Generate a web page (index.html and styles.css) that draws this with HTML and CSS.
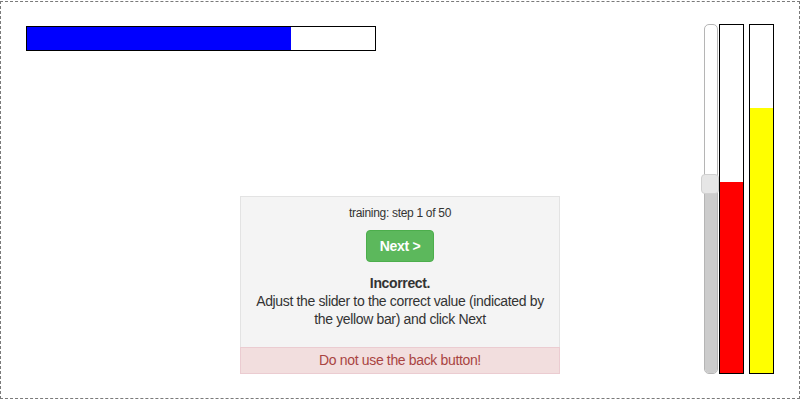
FILE: index.html
```html
<!DOCTYPE html>
<html>
<head>
<meta charset="utf-8">
<link rel="stylesheet" href="styles.css">
</head>
<body>
<div class="frame">
  <div class="progress"><div class="progress-fill" style="width:264px"></div></div>
  <div class="panel">
    <div class="panel-body">
      <div class="step">training: step 1 of 50</div>
      <button class="btn-next">Next &gt;</button>
      <div class="feedback">
        <strong>Incorrect.</strong><br>
        Adjust the slider to the correct value (indicated by the yellow bar) and click Next
      </div>
    </div>
    <div class="alert">Do not use the back button!</div>
  </div>
  <div class="bars">
    <div class="slider">
      <div class="slider-empty"></div>
      <div class="slider-fill" style="height:190px"><div class="slider-thumb"></div></div>
    </div>
    <div class="vbar"><div class="vbar-fill red" style="height:191px"></div></div>
    <div class="vbar yellow-bar"><div class="vbar-fill yellow" style="height:265px"></div></div>
  </div>
</div>
</body>
</html>
```

FILE: styles.css
```css
* { box-sizing: border-box; }
html, body { margin: 0; padding: 0; background: #fff; }
body {
  font-family: "Liberation Sans", Arial, sans-serif;
  color: #333;
  font-size: 14px;
}
.frame {
  margin-top: 1px;
  width: 800px;
  height: 398px;
  border: 1px dashed #7a7a7a;
  padding: 22px 25px 24px 25px;
  display: grid;
  grid-template-columns: 1fr 320px 1fr;
  grid-template-rows: 1fr;
}
.progress {
  grid-column: 1 / span 2;
  grid-row: 1;
  align-self: start;
  justify-self: start;
  margin-top: 2px;
  width: 350px;
  height: 25px;
  border: 1px solid #000;
  background: #fff;
}
.progress-fill { height: 100%; background: #0000ff; }

.panel {
  grid-column: 2;
  grid-row: 1;
  align-self: end;
  display: flex;
  flex-direction: column;
}
.panel-body {
  background: #f4f4f4;
  border: 1px solid #e3e3e3;
  border-bottom: none;
  padding: 8px 8px 19px;
  text-align: center;
  display: flex;
  flex-direction: column;
  align-items: center;
}
.step { font-size: 12px; line-height: 17px; letter-spacing: -0.3px; }
.btn-next {
  margin-top: 8px;
  font-family: "Liberation Sans", Arial, sans-serif;
  font-size: 14px;
  font-weight: bold;
  line-height: 20px;
  letter-spacing: -0.3px;
  color: #fff;
  background: #5cb85c;
  border: 1px solid #4cae4c;
  border-radius: 4px;
  padding: 5px 13px;
}
.feedback {
  margin-top: 12px;
  font-size: 14px;
  line-height: 18px;
  letter-spacing: -0.35px;
}
.alert {
  background: #f2dede;
  border: 1px solid #ebccd1;
  color: #a94442;
  text-align: center;
  font-size: 14px;
  line-height: 17px;
  letter-spacing: -0.35px;
  padding: 4px 10px;
}

.bars {
  grid-column: 3;
  grid-row: 1;
  justify-self: end;
  display: flex;
  align-items: stretch;
  height: 350px;
}
.slider {
  width: 14px;
  border: 1px solid #b5b5b5;
  border-radius: 5px;
  background: #fff;
  display: flex;
  flex-direction: column;
  margin-right: 1px;
}
.slider-empty { flex: 1; }
.slider-fill {
  position: relative;
  background: #cccccc;
  border-radius: 0 0 4px 4px;
}
.slider-thumb {
  position: absolute;
  left: -4px;
  top: -9px;
  width: 18px;
  height: 20px;
  background: #e6e6e6;
  border: 1px solid #d0d0d0;
  border-radius: 4px;
}
.vbar {
  width: 25px;
  border: 1px solid #000;
  background: #fff;
  display: flex;
  flex-direction: column;
  justify-content: flex-end;
}
.yellow-bar { margin-left: 5px; }
.vbar-fill.red { background: #ff0000; }
.vbar-fill.yellow { background: #ffff00; }
```
